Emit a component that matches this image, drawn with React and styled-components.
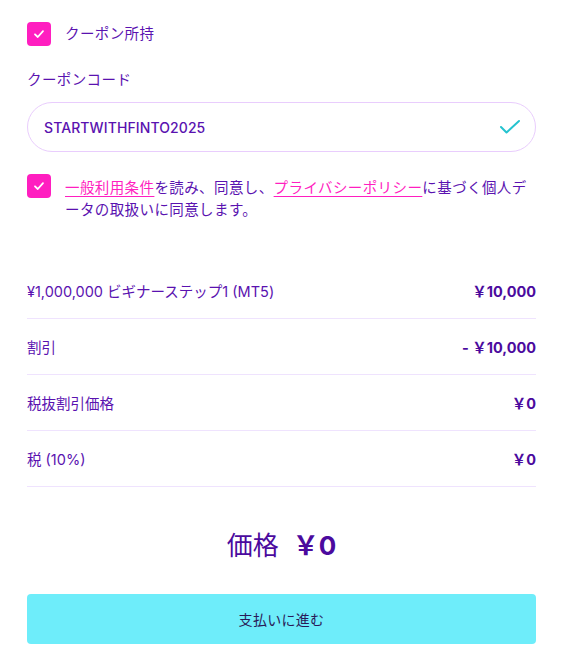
import React from "react";
import styled, { createGlobalStyle } from "styled-components";

const Global = createGlobalStyle`
  html, body { margin: 0; padding: 0; background: #fff; }
  body { font-family: "Inter", "Noto Sans CJK JP", sans-serif; color: #5a12b0; }
  * { box-sizing: border-box; }
`;

const Page = styled.div`
  width: 564px;
  padding: 22px 28px 0 27px;
  display: flex;
  flex-direction: column;
`;

const CheckRow = styled.label`
  display: flex;
  align-items: ${(p) => (p.$top ? "flex-start" : "center")};
  gap: 14px;
  margin-top: ${(p) => p.$mt || 0}px;
`;

const Box = styled.span`
  flex: 0 0 24px;
  width: 24px;
  height: 24px;
  border-radius: 4px;
  background: #ff1ec0;
  display: flex;
  align-items: center;
  justify-content: center;
`;

const CheckText = styled.span`
  font-size: 14.5px;
  line-height: 22px;
  letter-spacing: 0.4px;
  color: #5a12b0;
  margin-top: ${(p) => p.$mt || 0}px;
`;

const Link = styled.a`
  color: #ff1ec0;
  text-decoration: underline;
  text-underline-offset: 3px;
  text-decoration-thickness: 1px;
`;

const FieldLabel = styled.div`
  font-size: 14.5px;
  line-height: 22px;
  letter-spacing: 0.4px;
  margin-top: 23px;
`;

const Input = styled.div`
  margin-top: 11px;
  height: 50px;
  border: 1.5px solid #e9cdfd;
  border-radius: 25px;
  display: flex;
  align-items: center;
  justify-content: space-between;
  padding: 0 14px 0 16px;
  font-size: 14px;
  font-weight: 500;
  letter-spacing: 0.1px;
  color: #5a12b0;
`;

const Summary = styled.div`
  margin-top: 42px;
  display: flex;
  flex-direction: column;
`;

const Row = styled.div`
  height: 56px;
  display: flex;
  align-items: center;
  justify-content: space-between;
  border-bottom: 1px solid #efe3fe;
  font-size: 14.5px;
`;

const Value = styled.span`
  font-weight: 700;
  color: #4b0a9e;
  font-size: 14.5px;
`;

const Total = styled.div`
  margin-top: 41px;
  text-align: center;
  font-size: 26px;
  line-height: 36px;
  color: #4b0a9e;
`;

const TotalAmount = styled.span`
  font-weight: 700;
  margin-left: 14px;
`;

const Pay = styled.button`
  margin-top: 30px;
  height: 50px;
  width: 100%;
  border: none;
  border-radius: 4px;
  background: #6eedfa;
  color: #2a1a58;
  font-family: inherit;
  font-size: 14px;
  letter-spacing: 0.3px;
`;

const Tick = ({ size = 12, color = "#fff", w = 1.8 }) => (
  <svg width={size} height={size} viewBox="0 0 12 12" fill="none">
    <path d="M2 6.3 L4.8 9 L10 3.2" stroke={color} strokeWidth={w} strokeLinecap="round" strokeLinejoin="round" />
  </svg>
);

const rows = [
  ["¥1,000,000 ビギナーステップ1 (MT5)", "￥10,000"],
  ["割引", "- ￥10,000"],
  ["税抜割引価格", "￥0"],
  ["税 (10%)", "￥0"],
];

export default function App() {
  return (
    <>
      <Global />
      <Page>
        <CheckRow>
          <Box><Tick /></Box>
          <CheckText>クーポン所持</CheckText>
        </CheckRow>
        <FieldLabel>クーポンコード</FieldLabel>
        <Input>
          <span>STARTWITHFINTO2025</span>
          <svg width="22" height="16" viewBox="0 0 22 16" fill="none">
            <path d="M2 8 L7.5 13.5 L20 2" stroke="#25c3cf" strokeWidth="2" strokeLinecap="round" strokeLinejoin="round" />
          </svg>
        </Input>
        <CheckRow $top $mt={22}>
          <Box><Tick /></Box>
          <CheckText $mt={3}>
            <Link>一般利用条件</Link>を読み、同意し、<Link>プライバシーポリシー</Link>に基づく個人データの取扱いに同意します。
          </CheckText>
        </CheckRow>
        <Summary>
          {rows.map(([l, v]) => (
            <Row key={l}>
              <span>{l}</span>
              <Value>{v}</Value>
            </Row>
          ))}
        </Summary>
        <Total>
          価格<TotalAmount>￥0</TotalAmount>
        </Total>
        <Pay>支払いに進む</Pay>
      </Page>
    </>
  );
}
